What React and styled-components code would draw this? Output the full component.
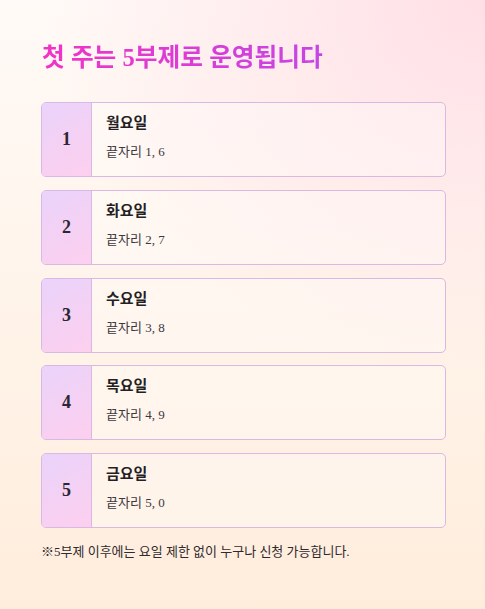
import React from 'react';
import styled, { createGlobalStyle } from 'styled-components';

const GlobalStyle = createGlobalStyle`
  html, body {
    margin: 0;
    padding: 0;
  }
  body {
    font-family: "Liberation Serif", "Noto Sans CJK KR", serif;
  }
`;

const Page = styled.main`
  box-sizing: border-box;
  width: 485px;
  height: 609px;
  padding: 40px 39px 0px 41px;
  background:
    radial-gradient(ellipse 440px 380px at 100% 0%, #ffdfe6 0%, rgba(255, 224, 230, 0) 100%),
    linear-gradient(to bottom, #fffaf7 0%, #ffeddc 100%);
`;

const Title = styled.h1`
  margin: 0px 0px 26px 1px;
  font-size: 24.7px;
  font-weight: 700;
  line-height: 36px;
  background: linear-gradient(90deg, #f133c6 0%, #b24ef2 100%);
  -webkit-background-clip: text;
  background-clip: text;
  color: transparent;
`;

const DayList = styled.ul`
  display: flex;
  flex-direction: column;
  gap: 12.75px;
  margin: 0;
  padding: 0;
  list-style-type: none;
`;

const DayCard = styled.li`
  display: flex;
  height: 75px;
  box-sizing: border-box;
  border: 1px solid #d9b9e4;
  border-radius: 5px;
  background-color: rgba(255, 255, 255, 0.3);
  overflow: hidden;
`;

const NumberCell = styled.div`
  display: flex;
  align-items: center;
  justify-content: center;
  flex: 0 0 49px;
  border-right: 1px solid #d9b9e4;
  background: linear-gradient(150deg, #ead3fb 0%, #fdcfee 100%);
  font-size: 18px;
  font-weight: 700;
  color: #2c2630;
`;

const DayInfo = styled.div`
  display: flex;
  flex-direction: column;
  padding: 9px 0px 0px 14px;
`;

const DayName = styled.div`
  font-size: 15px;
  font-weight: 700;
  line-height: 22px;
  color: #231f24;
`;

const DigitText = styled.div`
  margin: 8px 0px 0px 0px;
  font-size: 13px;
  line-height: 20px;
  color: #3d383e;
`;

const Note = styled.p`
  margin: 14px 0px 0px 0px;
  font-size: 13px;
  line-height: 20px;
  color: #2f2a30;
`;

const days = [
  { num: 1, name: '월요일', digits: '1, 6' },
  { num: 2, name: '화요일', digits: '2, 7' },
  { num: 3, name: '수요일', digits: '3, 8' },
  { num: 4, name: '목요일', digits: '4, 9' },
  { num: 5, name: '금요일', digits: '5, 0' },
];

const App = () => {
  return (
    <Page>
      <GlobalStyle />
      <Title>첫 주는 5부제로 운영됩니다</Title>
      <DayList>
        {days.map((day) => (
          <DayCard key={day.num}>
            <NumberCell>{day.num}</NumberCell>
            <DayInfo>
              <DayName>{day.name}</DayName>
              <DigitText>끝자리 {day.digits}</DigitText>
            </DayInfo>
          </DayCard>
        ))}
      </DayList>
      <Note>※5부제 이후에는 요일 제한 없이 누구나 신청 가능합니다.</Note>
    </Page>
  );
};

export default App;
